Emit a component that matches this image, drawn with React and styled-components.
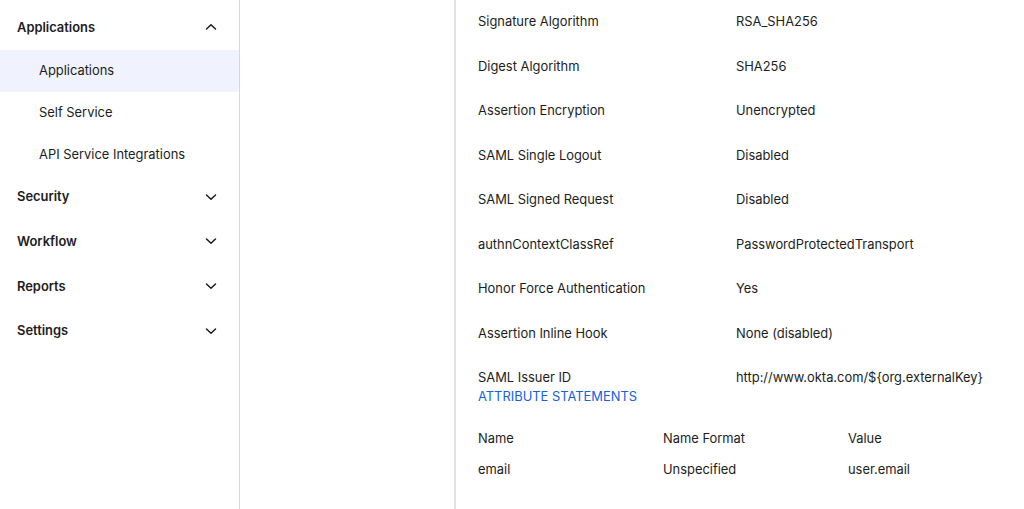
import styled, { createGlobalStyle } from "styled-components";

const GlobalStyle = createGlobalStyle`
  html, body {
    margin: 0;
    padding: 0;
    background: #ffffff;
  }
  body {
    font-family: Inter, "Noto Sans", "Liberation Sans", sans-serif;
    font-size: 12.9px;
    color: #1d1d21;
    overflow: hidden;
  }
`;

const Chevron = ({ up }) => (
  <svg width="12" height="12" viewBox="0 0 12 12" fill="none">
    <path
      d={up ? "M1.5 8 L6 3.8 L10.5 8" : "M1.5 4 L6 8.2 L10.5 4"}
      stroke="#1d1d21"
      strokeWidth="1.5"
      strokeLinecap="round"
      strokeLinejoin="round"
    />
  </svg>
);

const attributes = [
  ["Signature Algorithm", "RSA_SHA256"],
  ["Digest Algorithm", "SHA256"],
  ["Assertion Encryption", "Unencrypted"],
  ["SAML Single Logout", "Disabled"],
  ["SAML Signed Request", "Disabled"],
  ["authnContextClassRef", "PasswordProtectedTransport"],
  ["Honor Force Authentication", "Yes"],
  ["Assertion Inline Hook", "None (disabled)"],
  ["SAML Issuer ID", "http://www.okta.com/${org.externalKey}"],
];

const sections = ["Security", "Workflow", "Reports", "Settings"];

const App = () => {
  return (
    <>
      <GlobalStyle />
      <Page>
        <Sidebar>
          <NavHeader>
            <span>Applications</span>
            <Chevron up />
          </NavHeader>
          <NavItem active>Applications</NavItem>
          <NavItem>Self Service</NavItem>
          <NavItem>API Service Integrations</NavItem>
          <SectionList>
            {sections.map((s) => (
              <NavHeader key={s}>
                <span>{s}</span>
                <Chevron />
              </NavHeader>
            ))}
          </SectionList>
        </Sidebar>
        <Gutter />
        <Content>
          <Details>
            {attributes.map(([label, value]) => (
              <DetailRow key={label}>
                <span>{label}</span>
                <span>{value}</span>
              </DetailRow>
            ))}
          </Details>
          <SectionTitle>ATTRIBUTE STATEMENTS</SectionTitle>
          <Table>
            <TableRow head>
              <span>Name</span>
              <span>Name Format</span>
              <span>Value</span>
            </TableRow>
            <TableRow>
              <span>email</span>
              <span>Unspecified</span>
              <span>user.email</span>
            </TableRow>
          </Table>
        </Content>
      </Page>
    </>
  );
};

const Page = styled.div`
  display: flex;
  height: 509px;
  width: 1024px;
  overflow: hidden;
`;

const Sidebar = styled.nav`
  width: 239px;
  flex-shrink: 0;
  border-right: 1px solid #d7d7dc;
  padding-top: 5px;
  box-sizing: content-box;
`;

const SectionList = styled.div`
  display: flex;
  flex-direction: column;
  margin-top: -1px;
`;

const NavHeader = styled.div`
  display: flex;
  align-items: center;
  justify-content: space-between;
  height: 44.6px;
  padding: 0 22px 0 17px;
  font-weight: 600;
  color: #1d1d21;
`;

const NavItem = styled.div`
  display: flex;
  align-items: center;
  height: 42px;
  padding-left: 39px;
  padding-bottom: 1px;
  box-sizing: border-box;
  background: ${({ active }) => (active ? "#f0f3fd" : "transparent")};
  color: #1d1d21;
`;

const Gutter = styled.div`
  width: 214px;
  flex-shrink: 0;
  border-right: 2px solid #e1e1e3;
`;

const Content = styled.main`
  flex: 1;
  padding-left: 22px;
`;

const Details = styled.div`
  display: flex;
  flex-direction: column;
`;

const DetailRow = styled.div`
  display: grid;
  grid-template-columns: 258px 1fr;
  align-items: center;
  height: 44.5px;
  line-height: 20px;
`;

const SectionTitle = styled.div`
  color: #1662dd;
  line-height: 20px;
  margin-top: -13.5px;
`;

const Table = styled.div`
  display: flex;
  flex-direction: column;
  margin-top: 22px;
`;

const TableRow = styled.div`
  display: grid;
  grid-template-columns: 185px 185px 1fr;
  align-items: center;
  height: 20px;
  margin-bottom: ${({ head }) => (head ? "11px" : "0")};
  line-height: 20px;
`;

export default App;
